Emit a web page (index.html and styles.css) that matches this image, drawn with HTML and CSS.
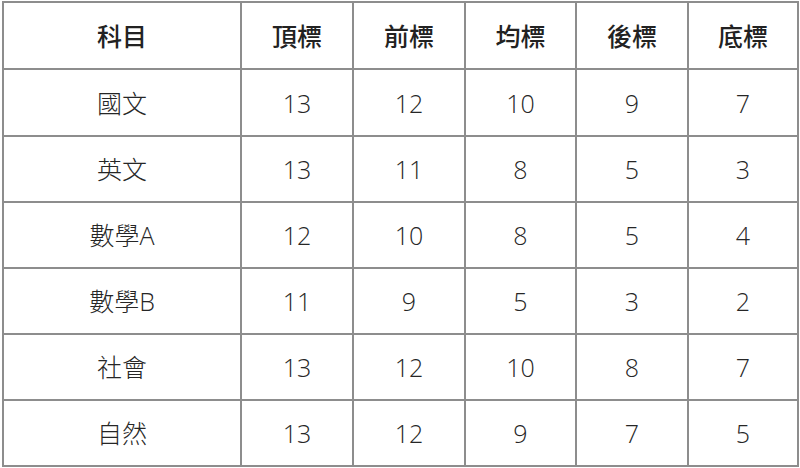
FILE: index.html
```html
<!DOCTYPE html>
<html lang="zh-Hant">
<head>
<meta charset="utf-8">
<link rel="stylesheet" href="styles.css">
</head>
<body>
<table class="grade">
  <colgroup>
    <col class="c1"><col class="c2"><col class="c3"><col class="c4"><col class="c5"><col class="c6">
  </colgroup>
  <thead>
    <tr class="r-a"><th>科目</th><th>頂標</th><th>前標</th><th>均標</th><th>後標</th><th>底標</th></tr>
  </thead>
  <tbody>
    <tr class="r-a"><td>國文</td><td>13</td><td>12</td><td>10</td><td>9</td><td>7</td></tr>
    <tr class="r-b"><td>英文</td><td>13</td><td>11</td><td>8</td><td>5</td><td>3</td></tr>
    <tr class="r-b"><td>數學A</td><td>12</td><td>10</td><td>8</td><td>5</td><td>4</td></tr>
    <tr class="r-b"><td>數學B</td><td>11</td><td>9</td><td>5</td><td>3</td><td>2</td></tr>
    <tr class="r-b"><td>社會</td><td>13</td><td>12</td><td>10</td><td>8</td><td>7</td></tr>
    <tr class="r-b"><td>自然</td><td>13</td><td>12</td><td>9</td><td>7</td><td>5</td></tr>
  </tbody>
</table>
</body>
</html>
```
FILE: styles.css
```css
html, body {
  margin: 0;
  padding: 0;
  background: #ffffff;
}
body {
  padding: 1px 0 0 2px;
  font-family: "Open Sans", "Noto Sans CJK TC", sans-serif;
}
.grade {
  border-collapse: separate;
  border-spacing: 0;
  table-layout: fixed;
  width: 797px;
  border-top: 2px solid #8d8d8d;
  border-left: 2px solid #8d8d8d;
}
.c1 { width: 238px; }
.c2 { width: 112px; }
.c3 { width: 112px; }
.c4 { width: 111px; }
.c5 { width: 112px; }
.c6 { width: 110px; }
.grade th, .grade td {
  border-right: 2px solid #8d8d8d;
  border-bottom: 2px solid #8d8d8d;
  padding: 0;
  text-align: center;
  vertical-align: middle;
  font-size: 25px;
  line-height: 30px;
}
.grade th {
  font-weight: 500;
  color: #222222;
}
.grade td {
  font-weight: 300;
  color: #262626;
}
.r-a th, .r-a td { height: 65px; }
.r-b td { height: 64px; }
```
